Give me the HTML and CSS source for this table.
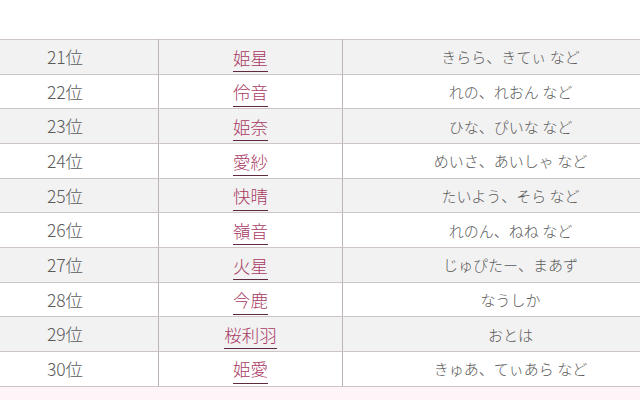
FILE: index.html
```html
<!DOCTYPE html>
<html lang="ja">
<head>
<meta charset="utf-8">
<link rel="stylesheet" href="styles.css">
</head>
<body>
<div class="page">
  <div class="top"></div>
  <table class="rank">
    <tbody>
      <tr class="odd"><td class="no">21位</td><td class="name"><a>姫星</a></td><td class="read">きらら、きてぃ など</td></tr>
      <tr><td class="no">22位</td><td class="name"><a>伶音</a></td><td class="read">れの、れおん など</td></tr>
      <tr class="odd"><td class="no">23位</td><td class="name"><a>姫奈</a></td><td class="read">ひな、ぴいな など</td></tr>
      <tr><td class="no">24位</td><td class="name"><a>愛紗</a></td><td class="read">めいさ、あいしゃ など</td></tr>
      <tr class="odd"><td class="no">25位</td><td class="name"><a>快晴</a></td><td class="read">たいよう、そら など</td></tr>
      <tr><td class="no">26位</td><td class="name"><a>嶺音</a></td><td class="read">れのん、ねね など</td></tr>
      <tr class="odd"><td class="no">27位</td><td class="name"><a>火星</a></td><td class="read">じゅぴたー、まあず</td></tr>
      <tr><td class="no">28位</td><td class="name"><a>今鹿</a></td><td class="read">なうしか</td></tr>
      <tr class="odd"><td class="no">29位</td><td class="name"><a>桜利羽</a></td><td class="read">おとは</td></tr>
      <tr><td class="no">30位</td><td class="name"><a>姫愛</a></td><td class="read">きゅあ、てぃあら など</td></tr>
    </tbody>
  </table>
  <div class="bottom"></div>
</div>
</body>
</html>
```
FILE: styles.css
```css
html, body {
  margin: 0;
  padding: 0;
  width: 640px;
  height: 400px;
  overflow: hidden;
  background: #fdf5f7;
}
.page {
  width: 640px;
  overflow: hidden;
  font-family: "Noto Sans CJK JP", "Noto Sans", sans-serif;
  font-weight: 300;
  color: #5a5a5a;
}
.top {
  height: 39px;
  background: #fff;
}
.rank {
  border-collapse: collapse;
  margin-left: -28px;
  width: 706px;
  table-layout: fixed;
  background: #fff;
}
.rank td {
  height: 33.67px;
  padding: 0;
  text-align: center;
  vertical-align: middle;
  border-top: 1px solid #cdc4c4;
  border-bottom: 1px solid #cdc4c4;
  line-height: 1;
}
.rank tr.odd td {
  background: #f3f2f2;
}
.no {
  width: 186px;
  font-size: 17.5px;
  border-right: 1px solid #bdb5b5;
}
.name {
  width: 183px;
  border-right: 1px solid #bdb5b5;
}
.name a {
  display: inline-block;
  font-size: 17.5px;
  color: #a83a64;
  padding-top: 7px;
  padding-bottom: 5px;
  border-bottom: 1px solid #5e2a42;
  line-height: 1;
}
.read {
  font-size: 15px;
}
.bottom {
  height: 20px;
}
```
